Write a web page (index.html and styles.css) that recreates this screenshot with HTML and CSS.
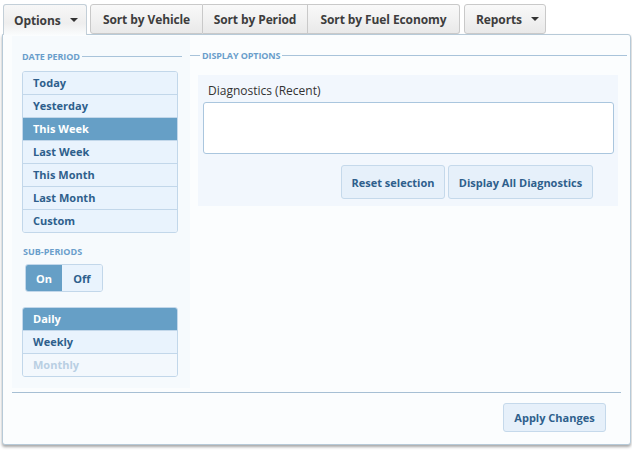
FILE: index.html
```html
<!DOCTYPE html>
<html>
<head>
<meta charset="utf-8">
<link rel="stylesheet" href="styles.css">
</head>
<body>
<div class="toolbar">
  <button class="tb-btn tb-open">Options <span class="caret"></span></button>
  <div class="tb-group">
    <button class="tb-btn g-first">Sort by Vehicle</button>
    <button class="tb-btn g-mid">Sort by Period</button>
    <button class="tb-btn g-last">Sort by Fuel Economy</button>
  </div>
  <button class="tb-btn tb-reports">Reports <span class="caret"></span></button>
</div>
<div class="panel">
  <div class="panel-body">
    <div class="left-col">
      <div class="legend legend-left"><span>DATE PERIOD</span><i class="rule"></i></div>
      <ul class="list">
        <li>Today</li>
        <li>Yesterday</li>
        <li class="active">This Week</li>
        <li>Last Week</li>
        <li>This Month</li>
        <li>Last Month</li>
        <li>Custom</li>
      </ul>
      <div class="sub-label">SUB-PERIODS</div>
      <div class="toggle">
        <span class="t-on">On</span><span class="t-off">Off</span>
      </div>
      <ul class="list list2">
        <li class="active">Daily</li>
        <li>Weekly</li>
        <li class="disabled">Monthly</li>
      </ul>
    </div>
    <div class="right-col">
      <div class="legend legend-right"><i class="rule short"></i><span>DISPLAY OPTIONS</span><i class="rule"></i></div>
      <div class="diag-box">
        <div class="diag-label">Diagnostics (Recent)</div>
        <div class="diag-input"></div>
        <div class="diag-actions">
          <button class="light-btn reset">Reset selection</button>
          <button class="light-btn all">Display All Diagnostics</button>
        </div>
      </div>
    </div>
  </div>
  <div class="footer">
    <button class="light-btn apply">Apply Changes</button>
  </div>
</div>
</body>
</html>
```
FILE: styles.css
```css
* { box-sizing: border-box; }
html, body { margin: 0; padding: 0; }
body {
  background: #ffffff;
  font-family: "Open Sans", "Liberation Sans", sans-serif;
  width: 632px;
  height: 451px;
  overflow: hidden;
}
button { font-family: inherit; white-space: nowrap; }

.toolbar {
  display: flex;
  align-items: flex-end;
  padding: 4px 0 0 3px;
  height: 35px;
  position: relative;
  z-index: 2;
}
.tb-btn {
  height: 30px;
  border: 1px solid #c9c9c9;
  border-radius: 3px;
  background: linear-gradient(#f9f9f9, #e9e9e9);
  color: #3d3d3d;
  font-size: 12px;
  font-weight: 700;
  letter-spacing: -0.1px;
  padding: 0;
  display: flex;
  align-items: center;
  justify-content: center;
  gap: 9px;
  margin: 0 0 1px 0;
}
.tb-open {
  width: 84px;
  height: 31px;
  margin-bottom: 0;
  border-bottom: none;
  border-color: #c3cfd8;
  border-radius: 3px 3px 0 0;
  background: linear-gradient(#f7f7f7 0%, #eeeeee 60%, #fafcfd 100%);
  justify-content: flex-start;
  padding-left: 10px;
}
.caret {
  width: 0; height: 0;
  border-left: 4px solid transparent;
  border-right: 4px solid transparent;
  border-top: 4px solid #333;
  display: inline-block;
}
.tb-group { display: flex; margin-left: 3px; }
.g-first { border-radius: 3px 0 0 3px; width: 113px; }
.g-mid { border-radius: 0; border-left: none; width: 105px; }
.g-last { border-radius: 0 3px 3px 0; border-left: none; width: 152px; }
.tb-reports { margin-left: 4px; width: 82px; justify-content: flex-start; padding-left: 11px; }

.panel {
  margin: -1px 0 0 2px;
  width: 629px;
  height: 411px;
  border: 1px solid #b7cad8;
  border-radius: 0 3px 3px 3px;
  background: #fbfdfe;
  box-shadow: 0 2px 3px rgba(0,0,0,0.35);
  position: relative;
  z-index: 1;
  display: flex;
  flex-direction: column;
}
.panel-body {
  display: grid;
  grid-template-columns: 178px 1fr;
  padding: 0 0 0 9px;
  height: 357px;
}
.left-col {
  background: #f6fafd;
  padding: 14px 10px 0 10px;
  margin: 1px 0 4px 0;
}
.legend {
  display: flex;
  align-items: center;
  color: #6a9ecb;
  font-size: 9px;
  font-weight: 700;
  height: 12px;
  letter-spacing: -0.1px;
}
.rule { flex: 1; height: 1px; background: #a8c3da; display: block; margin-left: 2px; }
.rule.short { flex: 0 0 10px; margin: 0 2px 0 0; }
.legend-left { margin-right: -2px; }

.list {
  list-style: none;
  margin: 9px 0 0 0;
  padding: 0;
  border: 1px solid #c2d7ea;
  border-radius: 3px;
  overflow: hidden;
  width: 156px;
}
.list li {
  height: 23px;
  line-height: 22px;
  padding-left: 10px;
  background: #e9f3fd;
  border-top: 1px solid #c2d7ea;
  color: #2e5f8c;
  font-size: 11px;
  font-weight: 700;
}
.list li:first-child { border-top: none; height: 22px; }
.list li.active { background: #669fc6; color: #ffffff; }
.list li.disabled { background: #f3f8fd; color: #b9cfe3; }

.sub-label {
  margin: 13px 0 0 1px;
  color: #6a9ecb;
  font-size: 9px;
  font-weight: 700;
  height: 12px;
  line-height: 12px;
}
.toggle {
  display: flex;
  margin: 6px 0 0 3px;
  width: 78px;
  height: 28px;
  border: 1px solid #c2d7ea;
  border-radius: 3px;
  overflow: hidden;
  font-size: 11px;
  font-weight: 700;
}
.toggle span { display: flex; align-items: center; justify-content: center; }
.t-on { width: 36px; background: #669fc6; color: #fff; }
.t-off { flex: 1; background: #e9f3fd; color: #2e5f8c; }
.list2 { margin-top: 15px; }

.right-col { padding: 14px 0 0 0; }
.legend-right { margin: 0 3px 0 0; }
.diag-box {
  margin: 14px 0 0 8px;
  width: 420px;
  height: 131px;
  background: #f2f7fd;
  padding: 9px 4px 0 5px;
}
.diag-label {
  font-size: 12px;
  color: #333;
  padding-left: 5px;
  height: 18px;
  line-height: 14px;
}
.diag-input {
  height: 52px;
  background: #fff;
  border: 1px solid #aac6de;
  border-radius: 3px;
}
.diag-actions {
  display: flex;
  justify-content: flex-end;
  gap: 3px;
  margin-top: 11px;
  padding-right: 21px;
}
.light-btn {
  height: 34px;
  border: 1px solid #c5d9eb;
  border-radius: 3px;
  background: #e6f0fa;
  color: #2e5f8c;
  font-size: 11px;
  font-weight: 700;
  padding: 0;
}
.reset { width: 104px; }
.all { width: 145px; }

.footer {
  margin: 0 9px 0 9px;
  border-top: 1px solid #a6bfd4;
  display: flex;
  justify-content: flex-end;
  padding: 10px 15px 0 0;
}
.apply { width: 103px; height: 29px; }
```
